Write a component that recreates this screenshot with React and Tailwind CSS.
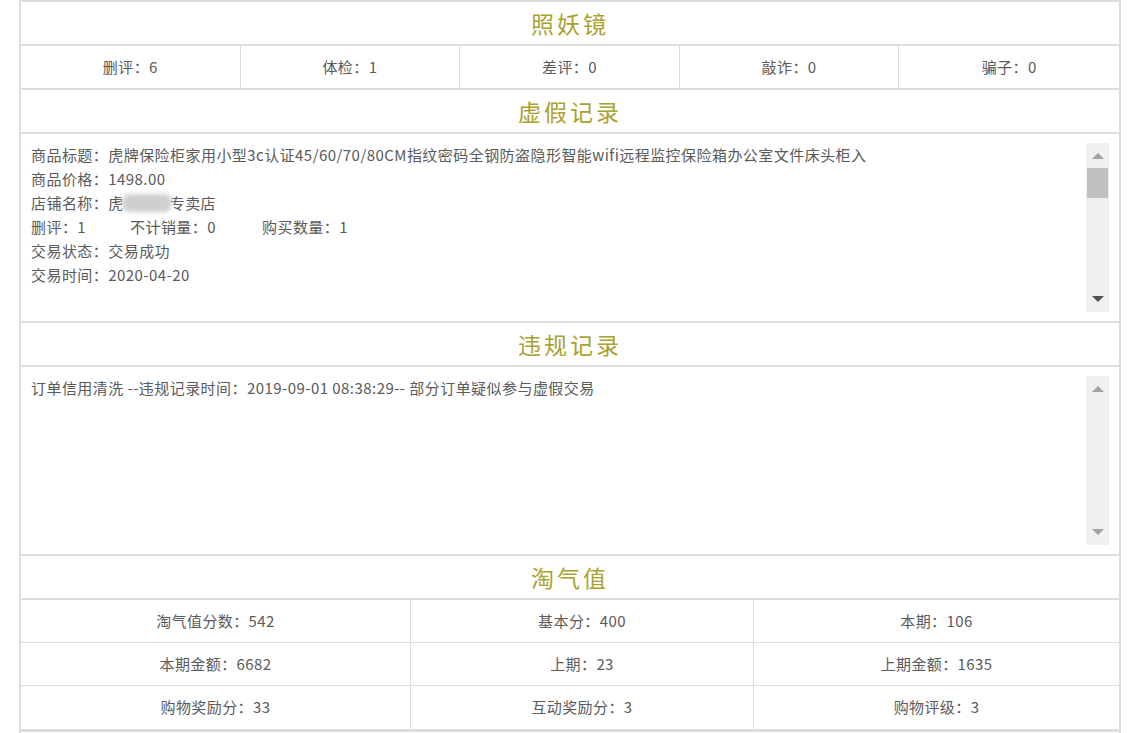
const font = { fontFamily: '"Noto Sans CJK SC", "Noto Sans", sans-serif' };

const stats = [
  ["删评", 6],
  ["体检", 1],
  ["差评", 0],
  ["敲诈", 0],
  ["骗子", 0],
];

const taoqi = [
  ["淘气值分数", 542],
  ["基本分", 400],
  ["本期", 106],
  ["本期金额", 6682],
  ["上期", 23],
  ["上期金额", 1635],
  ["购物奖励分", 33],
  ["互动奖励分", 3],
  ["购物评级", 3],
];

function Title({ children }) {
  return (
    <div className="h-[44px] flex items-center justify-center border-b-2 border-[#ddd] text-[23px] tracking-[3px] text-[#aaa22f]">
      {children}
    </div>
  );
}

function FakeScrollbar({ thumb }) {
  return (
    <div className="w-[23px] shrink-0 bg-[#f0f0f0] flex flex-col items-center justify-between py-[10px] relative">
      <div className="w-0 h-0 border-l-[6px] border-r-[6px] border-b-[6px] border-l-transparent border-r-transparent border-b-[#a3a3a3]" />
      {thumb && (
        <div className="absolute left-[1px] right-[1px] top-[25px] h-[30px] bg-[#c1c1c1]" />
      )}
      <div
        className={
          "w-0 h-0 border-l-[6px] border-r-[6px] border-t-[6px] border-l-transparent border-r-transparent " +
          (thumb ? "border-t-[#505050]" : "border-t-[#a3a3a3]")
        }
      />
    </div>
  );
}

function ScrollBox({ children, thumb }) {
  return (
    <div className="px-[10px] pt-[9px] pb-[9px] border-b-2 border-[#ddd]">
      <div className="h-[169px] flex">
        <div className="flex-1 text-[15px] tracking-[0.45px] leading-[24px] text-[#5a5a5a]">{children}</div>
        <FakeScrollbar thumb={thumb} />
      </div>
    </div>
  );
}

export default function App() {
  return (
    <div className="min-h-screen bg-white" style={font}>
      <div className="ml-[19px] w-[1102px] border-x-2 border-t-2 border-[#ddd]">
        <Title>照妖镜</Title>
        <div className="grid grid-cols-5 border-b-2 border-[#ddd] text-[15px] tracking-[0.4px] text-[#5a5a5a]">
          {stats.map(([k, v], i) => (
            <div
              key={k}
              className={
                "h-[42px] flex items-center justify-center " +
                (i < stats.length - 1 ? "border-r border-[#ddd]" : "")
              }
            >
              {k}：{v}
            </div>
          ))}
        </div>

        <Title>虚假记录</Title>
        <ScrollBox thumb>
          <div>商品标题：虎牌保险柜家用小型3c认证45/60/70/80CM指纹密码全钢防盗隐形智能wifi远程监控保险箱办公室文件床头柜入</div>
          <div>商品价格：1498.00</div>
          <div className="flex items-center">
            <span>店铺名称：虎</span>
            <span className="inline-block w-[50px] h-[18px] -ml-[2px] -mr-[2px] rounded-lg bg-[#cfcfcf] blur-[2px]" />
            <span>专卖店</span>
          </div>
          <div className="flex">
            <span className="w-[99px]">删评：1</span>
            <span className="w-[132px]">不计销量：0</span>
            <span>购买数量：1</span>
          </div>
          <div>交易状态：交易成功</div>
          <div>交易时间：2020-04-20</div>
        </ScrollBox>

        <Title>违规记录</Title>
        <ScrollBox>
          <div>订单信用清洗 --违规记录时间：2019-09-01 08:38:29-- 部分订单疑似参与虚假交易</div>
        </ScrollBox>

        <Title>淘气值</Title>
        <div className="grid grid-cols-[390px_343px_1fr] text-[15px] tracking-[0.4px] text-[#5a5a5a] border-b-[3px] border-[#ddd]">
          {taoqi.map(([k, v], i) => (
            <div
              key={k}
              className={
                "h-[43px] flex items-center justify-center " +
                (i % 3 < 2 ? "border-r border-[#ddd] " : "") +
                (i < 6 ? "border-b border-[#ddd]" : "h-[42px]")
              }
            >
              {k}：{v}
            </div>
          ))}
        </div>
        <div className="h-[40px]" />
      </div>
    </div>
  );
}
